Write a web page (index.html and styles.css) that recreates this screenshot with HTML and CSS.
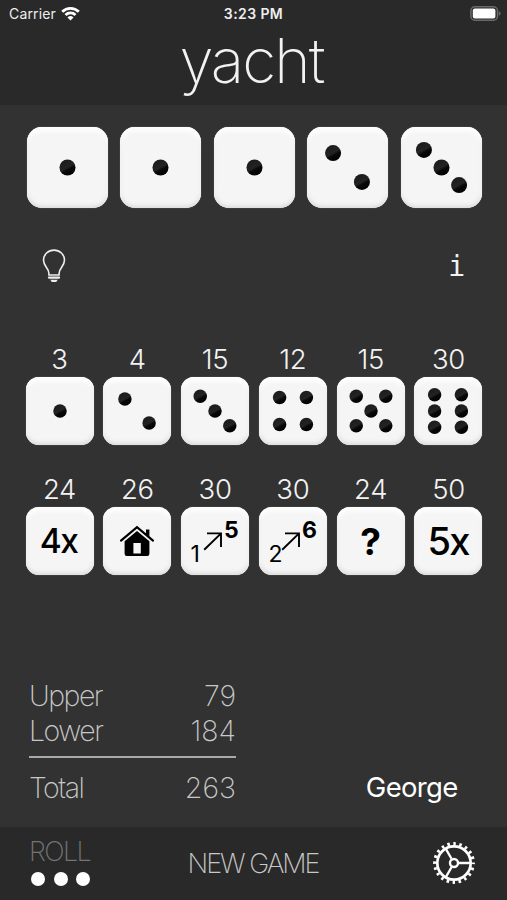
FILE: index.html
```
<!DOCTYPE html>
<html lang="en">

<head>
    <meta charset="utf-8">
    <title>yacht</title>
    <meta name="viewport" content="width=device-width, initial-scale=1">
    <link rel="stylesheet" href="styles.css">
</head>

<body>
    <!-- shared die faces -->
    <svg class="defs" width="0" height="0">
        <defs>
            <linearGradient id="shine" x1="0.2" y1="0" x2="0.75" y2="1">
                <stop offset="0" stop-color="#1a1a1a"/>
                <stop offset="0.5" stop-color="#232323"/>
                <stop offset="0.64" stop-color="#080808"/>
                <stop offset="1" stop-color="#000"/>
            </linearGradient>
            <circle id="pip" r="9.9" fill="url(#shine)"/>
            <symbol id="face1" viewBox="-50 -50 100 100">
                <use href="#pip"/>
            </symbol>
            <symbol id="face2" viewBox="-50 -50 100 100">
                <use href="#pip" x="-17.8" y="-17.8"/><use href="#pip" x="17.8" y="17.8"/>
            </symbol>
            <symbol id="face3" viewBox="-50 -50 100 100">
                <use href="#pip" x="-21.7" y="-21.7"/><use href="#pip"/><use href="#pip" x="21.7" y="21.7"/>
            </symbol>
            <symbol id="face4" viewBox="-50 -50 100 100">
                <use href="#pip" x="-19.7" y="-19.7"/><use href="#pip" x="19.7" y="-19.7"/>
                <use href="#pip" x="-19.7" y="19.7"/><use href="#pip" x="19.7" y="19.7"/>
            </symbol>
            <symbol id="face5" viewBox="-50 -50 100 100">
                <use href="#pip" x="-21.7" y="-21.7"/><use href="#pip" x="21.7" y="-21.7"/><use href="#pip"/>
                <use href="#pip" x="-21.7" y="21.7"/><use href="#pip" x="21.7" y="21.7"/>
            </symbol>
            <symbol id="face6" viewBox="-50 -50 100 100">
                <use href="#pip" x="-19.7" y="-23.8"/><use href="#pip" x="19.7" y="-23.8"/>
                <use href="#pip" x="-19.7"/><use href="#pip" x="19.7"/>
                <use href="#pip" x="-19.7" y="23.8"/><use href="#pip" x="19.7" y="23.8"/>
            </symbol>
            <symbol id="arrow" viewBox="0 0 20 20">
                <path d="M1.2 18.8L17.8 2.6M4 2.4H18V16" fill="none" stroke="#000" stroke-width="1.9"/>
            </symbol>
        </defs>
    </svg>

    <header class="header">
        <div class="status">
            <div class="carrier">
                <span>Carrier</span>
                <svg class="wifi" viewBox="0 0 19 15">
                    <g fill="none" stroke="#fff" stroke-width="2.8">
                        <path d="M1.2 5.7A11.8 11.8 0 0 1 17.8 5.7"/>
                        <path d="M4.5 9A7.1 7.1 0 0 1 14.5 9"/>
                    </g>
                    <path d="M9.5 14.4L6.5 11.4A4.3 4.3 0 0 1 12.5 11.4Z" fill="#fff"/>
                </svg>
            </div>
            <div class="clock">3:23 PM</div>
            <svg class="battery" viewBox="0 0 31 15">
                <rect x="0.9" y="0.8" width="26.6" height="13.4" rx="4" fill="none" stroke="#6a6a6a" stroke-width="1.5"/>
                <rect x="2.8" y="2.6" width="22.6" height="9.8" rx="2" fill="#fff"/>
                <path d="M28.8 5.2Q30.6 5.8 30.6 7.5T28.8 9.8Z" fill="#6a6a6a"/>
            </svg>
        </div>
        <h1 class="title">yacht</h1>
    </header>

    <main class="board">
        <div class="hand">
            <div class="die"><svg><use href="#face1"/></svg></div>
            <div class="die"><svg><use href="#face1"/></svg></div>
            <div class="die"><svg><use href="#face1"/></svg></div>
            <div class="die"><svg><use href="#face2"/></svg></div>
            <div class="die"><svg><use href="#face3"/></svg></div>
        </div>

        <div class="tools">
            <svg class="bulb" viewBox="0 0 24 34">
                <path d="M6.9 26V24.2C6.9 19.2 1.5 17.5 1.5 11.1A10.5 10 0 0 1 22.5 11.1C22.5 17.5 17.1 19.2 17.1 24.2V26Z" fill="none" stroke="#eee" stroke-width="1.6"/>
                <path d="M6.9 28.6H17.1" stroke="#eee" stroke-width="2.1" stroke-linecap="round"/>
                <path d="M8.3 30.8H15.7L14.2 33H9.8Z" fill="#eee"/>
            </svg>
            <span class="info">i</span>
        </div>

        <div class="scores">
            <div class="score"><span class="points">3</span><div class="die"><svg><use href="#face1"/></svg></div></div>
            <div class="score"><span class="points">4</span><div class="die"><svg><use href="#face2"/></svg></div></div>
            <div class="score"><span class="points">15</span><div class="die"><svg><use href="#face3"/></svg></div></div>
            <div class="score"><span class="points">12</span><div class="die"><svg><use href="#face4"/></svg></div></div>
            <div class="score"><span class="points">15</span><div class="die"><svg><use href="#face5"/></svg></div></div>
            <div class="score"><span class="points">30</span><div class="die"><svg><use href="#face6"/></svg></div></div>

            <div class="score"><span class="points">24</span><div class="die four-kind">4x</div></div>
            <div class="score">
                <span class="points">26</span>
                <div class="die">
                    <svg class="house" viewBox="0 0 34 32">
                        <path d="M1 15.6L17 2.2L33 15.6" fill="none" stroke="#000" stroke-width="2.2" stroke-linecap="round"/>
                        <path d="M26 4.5H29.4V11.8L26 8.9Z"/>
                        <path fill-rule="evenodd" d="M4.6 16.2L17 5.9L29.4 16.2V28.8Q29.4 31 27.2 31H6.8Q4.6 31 4.6 28.8ZM13.4 18V28.6H20.8V18Z"/>
                    </svg>
                </div>
            </div>
            <div class="score">
                <span class="points">30</span>
                <div class="die run"><span class="from">1</span><svg class="arrow"><use href="#arrow"/></svg><b class="to">5</b></div>
            </div>
            <div class="score">
                <span class="points">30</span>
                <div class="die run"><span class="from">2</span><svg class="arrow"><use href="#arrow"/></svg><b class="to">6</b></div>
            </div>
            <div class="score"><span class="points">24</span><div class="die chance">?</div></div>
            <div class="score"><span class="points">50</span><div class="die five-kind">5x</div></div>
        </div>

        <div class="summary">
            <div class="totals">
                <div class="line"><span>Upper</span><span class="amount">79</span></div>
                <div class="line"><span>Lower</span><span class="amount">184</span></div>
                <div class="line total"><span>Total</span><span class="amount">263</span></div>
            </div>
            <div class="player">George</div>
        </div>
    </main>

    <footer class="footer">
        <div class="roll">
            <span class="roll-label">ROLL</span>
            <div class="dots"><i></i><i></i><i></i></div>
        </div>
        <div class="new-game">NEW GAME</div>
        <svg class="gear" viewBox="-21 -21 42 42">
            <g fill="none" stroke="#fff">
                <circle r="19.3" stroke-width="3.2" stroke-dasharray="2.5 3.563" stroke-dashoffset="1.25"/>
                <circle r="16.7" stroke-width="2.7"/>
                <circle r="4" stroke-width="2.4"/>
                <path d="M5 0H16M-2.5 -4.3L-8 -13.9M-2.5 4.3L-8 13.9" stroke-width="2.3"/>
            </g>
        </svg>
    </footer>
</body>

</html>
```
FILE: styles.css
```
* {
    box-sizing: border-box;
}

body {
    margin: 0;
    height: 900px;
    display: flex;
    flex-direction: column;
    background-color: #323232;
    color: #f2f2f2;
    font-family: Inter, "Liberation Sans", sans-serif;
    overflow: hidden;
}

svg {
    display: block;
}

.defs {
    position: absolute;
}

/* header */
.header {
    height: 105px;
    background-color: #292929;
}

.status {
    height: 27px;
    padding: 0 6px 0 9px;
    display: grid;
    grid-template-columns: 1fr auto 1fr;
    align-items: center;
    font-size: 14px;
    color: #eee;
}

.carrier {
    display: flex;
    align-items: center;
    gap: 5px;
    letter-spacing: 0.15px;
}

.wifi {
    width: 19px;
    height: 15px;
}

.clock {
    font-weight: 600;
    letter-spacing: 0.4px;
    padding-right: 3px;
}

.battery {
    width: 31px;
    height: 15px;
    justify-self: end;
}

.title {
    margin: 0;
    padding-right: 4px;
    line-height: 67px;
    font-size: 62px;
    font-weight: 150;
    letter-spacing: -1.9px;
    text-align: center;
}

/* dice */
.board {
    flex: 1;
    display: flex;
    flex-direction: column;
}

.die {
    width: 68px;
    height: 68px;
    display: flex;
    align-items: center;
    justify-content: center;
    border-radius: 13px;
    background-color: #f5f5f5;
    box-shadow: inset 0 4px 5px #fff, inset 0 -2px 4px #dadada, inset 0 0 3px #ececec, 0 0 1px #999;
    color: #000;
}

.die svg {
    width: 100%;
    height: 100%;
}

.hand {
    display: flex;
    justify-content: space-between;
    padding: 21.5px 25.5px 0 26.5px;
}

.hand .die {
    width: 81px;
    height: 81px;
    border-radius: 15px;
}

.tools {
    height: 133px;
    padding: 41.5px 42px 0 42px;
    display: flex;
    justify-content: space-between;
    align-items: flex-start;
}

.bulb {
    width: 24px;
    height: 34px;
}

.info {
    font-family: "DejaVu Sans Mono", monospace;
    font-size: 28px;
    line-height: 35px;
}

.scores {
    padding: 0 24.5px 0 25.5px;
    display: grid;
    grid-template-columns: repeat(6, 68px);
    justify-content: space-between;
    row-gap: 26.5px;
}

.score {
    display: flex;
    flex-direction: column;
    align-items: center;
}

.points {
    line-height: 36px;
    font-size: 27.5px;
    font-weight: 270;
    letter-spacing: -0.3px;
}

.four-kind {
    padding-right: 2px;
    font-size: 33.5px;
    font-weight: 500;
    letter-spacing: -1.5px;
}

.five-kind {
    padding-right: 1px;
    font-size: 38px;
    font-weight: 500;
    letter-spacing: -1.8px;
}

.chance {
    font-size: 37px;
    font-weight: 700;
}

.die .house {
    width: 34px;
    height: 32px;
}

.run {
    justify-content: flex-start;
    padding-left: 9.5px;
}

.from {
    width: 12.5px;
    padding-top: 26px;
    font-size: 23px;
    line-height: 24px;
    letter-spacing: -1px;
}

.die .arrow {
    width: 20px;
    height: 20px;
}

.to {
    padding: 0 0 22px 1px;
    font-size: 23px;
    line-height: 24px;
}

/* totals */
.summary {
    margin-top: auto;
    padding: 0 49.5px 22px 29px;
    display: flex;
    justify-content: space-between;
    align-items: flex-end;
    color: #c8c8c8;
}

.totals {
    width: 207px;
    font-size: 28.5px;
    font-weight: 220;
    letter-spacing: -1.5px;
}

.amount {
    letter-spacing: 0;
}

.line {
    display: flex;
    justify-content: space-between;
    line-height: 35px;
}

.total {
    margin-top: 8px;
    padding-top: 12px;
    border-top: 2px solid #aba9a8;
}

.player {
    font-size: 27.5px;
    line-height: 35px;
    letter-spacing: -0.7px;
    color: #fff;
}

/* footer */
.footer {
    height: 73px;
    padding: 0 32px 0 29px;
    display: grid;
    grid-template-columns: 1fr auto 1fr;
    background-color: #292929;
}

.roll-label {
    display: block;
    margin-top: 8px;
    font-size: 27px;
    font-weight: 200;
    line-height: 34px;
    letter-spacing: -1.6px;
    color: #747474;
}

.dots {
    display: flex;
    gap: 8.5px;
    margin: 3px 0 0 2px;
}

.dots i {
    width: 14px;
    height: 14px;
    border-radius: 50%;
    background-color: #fff;
}

.new-game {
    padding-left: 2px;
    font-size: 27px;
    font-weight: 220;
    line-height: 73px;
    letter-spacing: -2px;
    color: #c8c8c8;
}

.gear {
    width: 42px;
    height: 42px;
    margin-top: 15px;
    justify-self: end;
}
```
